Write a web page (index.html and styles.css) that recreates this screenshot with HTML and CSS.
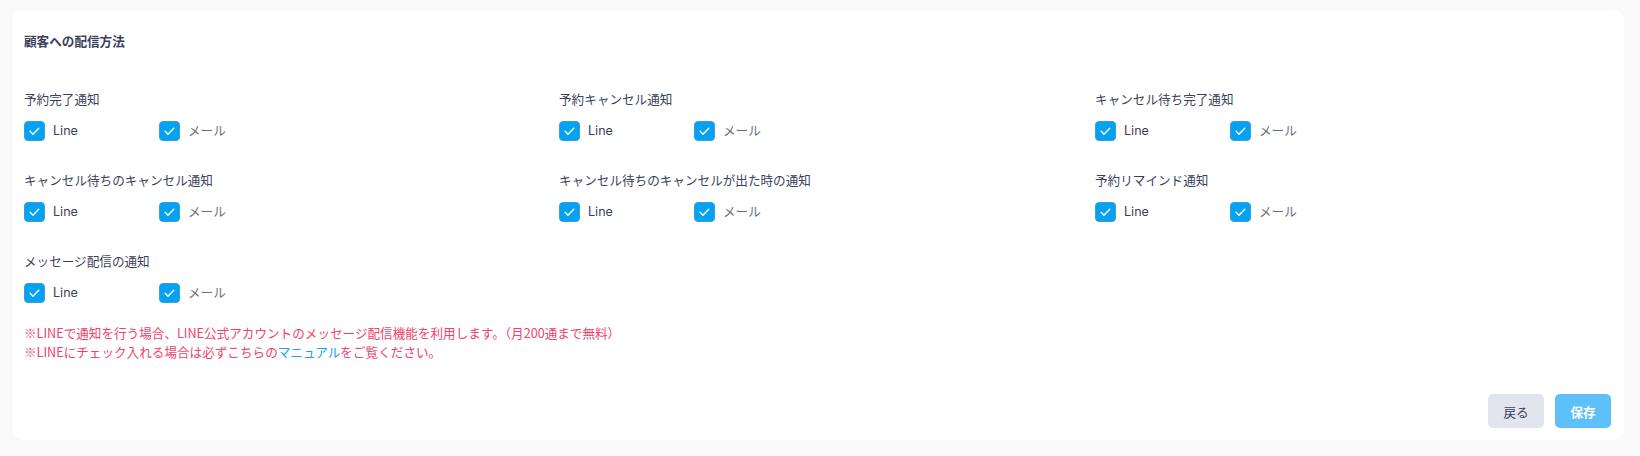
FILE: index.html
```html
<!DOCTYPE html>
<html lang="ja">
<head>
<meta charset="utf-8">
<link rel="stylesheet" href="styles.css">
</head>
<body>
<div class="page">
  <div class="card">
    <h2 class="title">顧客への配信方法</h2>
    <div class="grid">
      <div class="group">
        <div class="label">予約完了通知</div>
        <div class="opts">
          <label class="opt"><span class="cb"><svg viewBox="0 0 20 20"><path d="M5.2 10.4l3.1 3.1 6.4-6.6"/></svg></span><span class="t-line">Line</span></label>
          <label class="opt"><span class="cb"><svg viewBox="0 0 20 20"><path d="M5.2 10.4l3.1 3.1 6.4-6.6"/></svg></span><span class="t-mail">メール</span></label>
        </div>
      </div>
      <div class="group">
        <div class="label">予約キャンセル通知</div>
        <div class="opts">
          <label class="opt"><span class="cb"><svg viewBox="0 0 20 20"><path d="M5.2 10.4l3.1 3.1 6.4-6.6"/></svg></span><span class="t-line">Line</span></label>
          <label class="opt"><span class="cb"><svg viewBox="0 0 20 20"><path d="M5.2 10.4l3.1 3.1 6.4-6.6"/></svg></span><span class="t-mail">メール</span></label>
        </div>
      </div>
      <div class="group">
        <div class="label">キャンセル待ち完了通知</div>
        <div class="opts">
          <label class="opt"><span class="cb"><svg viewBox="0 0 20 20"><path d="M5.2 10.4l3.1 3.1 6.4-6.6"/></svg></span><span class="t-line">Line</span></label>
          <label class="opt"><span class="cb"><svg viewBox="0 0 20 20"><path d="M5.2 10.4l3.1 3.1 6.4-6.6"/></svg></span><span class="t-mail">メール</span></label>
        </div>
      </div>
      <div class="group">
        <div class="label">キャンセル待ちのキャンセル通知</div>
        <div class="opts">
          <label class="opt"><span class="cb"><svg viewBox="0 0 20 20"><path d="M5.2 10.4l3.1 3.1 6.4-6.6"/></svg></span><span class="t-line">Line</span></label>
          <label class="opt"><span class="cb"><svg viewBox="0 0 20 20"><path d="M5.2 10.4l3.1 3.1 6.4-6.6"/></svg></span><span class="t-mail">メール</span></label>
        </div>
      </div>
      <div class="group">
        <div class="label">キャンセル待ちのキャンセルが出た時の通知</div>
        <div class="opts">
          <label class="opt"><span class="cb"><svg viewBox="0 0 20 20"><path d="M5.2 10.4l3.1 3.1 6.4-6.6"/></svg></span><span class="t-line">Line</span></label>
          <label class="opt"><span class="cb"><svg viewBox="0 0 20 20"><path d="M5.2 10.4l3.1 3.1 6.4-6.6"/></svg></span><span class="t-mail">メール</span></label>
        </div>
      </div>
      <div class="group">
        <div class="label">予約リマインド通知</div>
        <div class="opts">
          <label class="opt"><span class="cb"><svg viewBox="0 0 20 20"><path d="M5.2 10.4l3.1 3.1 6.4-6.6"/></svg></span><span class="t-line">Line</span></label>
          <label class="opt"><span class="cb"><svg viewBox="0 0 20 20"><path d="M5.2 10.4l3.1 3.1 6.4-6.6"/></svg></span><span class="t-mail">メール</span></label>
        </div>
      </div>
      <div class="group">
        <div class="label">メッセージ配信の通知</div>
        <div class="opts">
          <label class="opt"><span class="cb"><svg viewBox="0 0 20 20"><path d="M5.2 10.4l3.1 3.1 6.4-6.6"/></svg></span><span class="t-line">Line</span></label>
          <label class="opt"><span class="cb"><svg viewBox="0 0 20 20"><path d="M5.2 10.4l3.1 3.1 6.4-6.6"/></svg></span><span class="t-mail">メール</span></label>
        </div>
      </div>
    </div>
    <div class="notes">
      <p>※LINEで通知を行う場合、LINE公式アカウントのメッセージ配信機能を利用します。（月200通まで無料）</p>
      <p>※LINEにチェック入れる場合は必ずこちらの<a class="link" href="#">マニュアル</a>をご覧ください。</p>
    </div>
    <div class="actions">
      <button class="btn btn-back">戻る</button>
      <button class="btn btn-save">保存</button>
    </div>
  </div>
</div>
</body>
</html>
```

FILE: styles.css
```css
* { box-sizing: border-box; }
html, body {
  margin: 0;
  padding: 0;
  background: #fafafa;
  height: 100%;
}
body {
  font-family: Inter, "Noto Sans CJK JP", sans-serif;
  font-size: 12.6px;
  color: #3b3f5c;
}
.page {
  height: 456px;
  padding: 10px 16px 16px 12px;
}
.card {
  height: 100%;
  background: #ffffff;
  border-radius: 10px;
  box-shadow: 0 0 2px rgba(0,0,0,0.03);
  padding: 22px 12px 12px 12px;
  display: flex;
  flex-direction: column;
}
.title {
  margin: 0;
  font-size: 12.6px;
  font-weight: 700;
  line-height: 20px;
  color: #3b3f5c;
}
.grid {
  margin-top: 39px;
  display: grid;
  grid-template-columns: 535px 536px 1fr;
  row-gap: 31px;
}
.label {
  line-height: 18px;
  color: #3b3f5c;
}
.opts {
  margin-top: 12px;
  display: flex;
  height: 20px;
}
.opt {
  width: 135px;
  display: flex;
  align-items: center;
  gap: 8px;
  cursor: pointer;
}
.cb {
  width: 21px;
  height: 20px;
  border-radius: 4px;
  background: #05a2f3;
  border: 1px solid #3a9ed8;
  display: flex;
  align-items: center;
  justify-content: center;
}
.cb svg {
  width: 19px;
  height: 18px;
}
.cb path {
  fill: none;
  stroke: #ffffff;
  stroke-width: 1.6;
  stroke-linecap: round;
  stroke-linejoin: round;
}
.t-line {
  color: #3b3f5c;
  line-height: 20px;
}
.t-mail {
  color: #6b6f82;
  line-height: 20px;
}
.notes {
  margin-top: 20px;
  color: #f2416b;
  line-height: 19px;
  font-family: "Noto Sans CJK JP", sans-serif;
}
.notes p { margin: 0; }
.link {
  color: #1e9ff2;
  text-decoration: none;
}
.actions {
  margin-top: auto;
  display: flex;
  justify-content: flex-end;
  gap: 11px;
  padding-right: 1px;
}
.btn {
  width: 56px;
  height: 34px;
  border: none;
  border-radius: 5px;
  font-family: Inter, "Noto Sans CJK JP", sans-serif;
  font-size: 12.6px;
  cursor: pointer;
}
.btn-back {
  background: #e2e4ee;
  color: #3b3f5c;
}
.btn-save {
  background: #5ec0f9;
  color: #ffffff;
  font-weight: 700;
}
```
